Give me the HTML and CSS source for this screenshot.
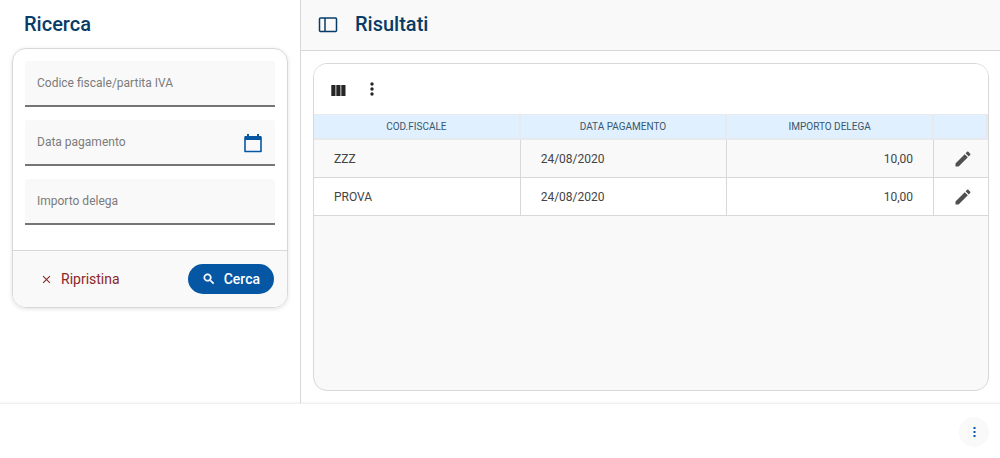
FILE: index.html
```html
<!DOCTYPE html>
<html lang="it">
<head>
<meta charset="utf-8">
<meta name="viewport" content="width=device-width, initial-scale=1">
<title>Ricerca deleghe</title>
<link rel="stylesheet" href="styles.css">
</head>
<body>
<div class="workspace">
  <aside class="sidebar">
    <h2 class="title sidebar-title">Ricerca</h2>
    <form class="search-card">
      <div class="fields">
        <div class="field">
          <input class="field-input" id="codice" type="text">
          <label class="field-label" for="codice">Codice fiscale/partita IVA</label>
        </div>
        <div class="field">
          <input class="field-input" id="data" type="text">
          <label class="field-label" for="data">Data pagamento</label>
          <button class="icon-button date-button" type="button" aria-label="Apri calendario">
            <svg width="18" height="20" viewBox="0 0 18 20"><path d="M1 4h16v14.500H1z" fill="none" stroke="currentColor" stroke-width="1.600" stroke-linejoin="round"/><path d="M1 3h16v4H1zM3 1h2v3H3zM13 1h2v3h-2z" fill="currentColor"/></svg>
          </button>
        </div>
        <div class="field">
          <input class="field-input" id="importo" type="text">
          <label class="field-label" for="importo">Importo delega</label>
        </div>
      </div>
      <div class="actions">
        <button class="button reset-button" type="reset">
          <svg width="13" height="13" viewBox="0 0 24 24" fill="currentColor"><path d="M19 6.410 17.590 5 12 10.590 6.410 5 5 6.410 10.590 12 5 17.590 6.410 19 12 13.410 17.590 19 19 17.590 13.410 12z"/></svg>
          Ripristina
        </button>
        <button class="button search-button" type="button">
          <svg width="14" height="14" viewBox="0 0 24 24" fill="currentColor" stroke="currentColor" stroke-width="1"><path d="M15.500 14h-.79l-.28-.27C15.410 12.590 16 11.110 16 9.500 16 5.910 13.090 3 9.500 3S3 5.910 3 9.500 5.910 16 9.500 16c1.610 0 3.090-.59 4.230-1.570l.27.28v.79l5 4.990L20.490 19l-4.990-5zm-6 0C7.010 14 5 11.990 5 9.500S7.010 5 9.500 5 14 7.010 14 9.500 11.990 14 9.500 14z"/></svg>
          Cerca
        </button>
      </div>
    </form>
  </aside>
  <main class="results">
    <header class="results-header">
      <button class="icon-button panel-button" type="button" aria-label="Mostra o nascondi ricerca">
        <svg width="20" height="18" viewBox="0 0 20 18" fill="none" stroke="currentColor" stroke-width="1.500"><rect x="1.500" y="3" width="17" height="13.500" rx="1"/><path d="M7 3v13.500"/></svg>
      </button>
      <h2 class="title">Risultati</h2>
    </header>
    <section class="results-card">
      <div class="toolbar">
        <button class="icon-button" type="button" aria-label="Colonne">
          <svg width="15" height="14" viewBox="0 0 15 14" fill="currentColor"><path d="M.3 3h4.200v11H.3zM5.300 3h4.200v11H5.300zM10.300 3h4.200v11h-4.200z"/></svg>
        </button>
        <button class="icon-button" type="button" aria-label="Altre opzioni">
          <svg width="4" height="14" viewBox="0 0 4 14" fill="currentColor"><circle cx="2" cy="2" r="1.700"/><circle cx="2" cy="7" r="1.700"/><circle cx="2" cy="12" r="1.700"/></svg>
        </button>
      </div>
      <table class="grid">
        <thead>
          <tr><th>COD.FISCALE</th><th>DATA PAGAMENTO</th><th>IMPORTO DELEGA</th><th class="edit-column"></th></tr>
        </thead>
        <tbody>
          <tr>
            <td>ZZZ</td><td>24/08/2020</td><td class="amount">10,00</td>
            <td class="edit-cell"><button class="icon-button" type="button" aria-label="Modifica ZZZ"><svg width="20" height="20" viewBox="0 0 24 24" fill="currentColor"><path d="M3 17.250V21h3.750L17.810 9.940l-3.750-3.750L3 17.250zM20.710 7.040c.39-.39.39-1.020 0-1.410l-2.340-2.340c-.39-.39-1.020-.39-1.410 0l-1.830 1.830 3.750 3.750 1.830-1.830z"/></svg></button></td>
          </tr>
          <tr>
            <td>PROVA</td><td>24/08/2020</td><td class="amount">10,00</td>
            <td class="edit-cell"><button class="icon-button" type="button" aria-label="Modifica PROVA"><svg width="20" height="20" viewBox="0 0 24 24" fill="currentColor"><path d="M3 17.250V21h3.750L17.810 9.940l-3.750-3.750L3 17.250zM20.710 7.040c.39-.39.39-1.020 0-1.410l-2.340-2.340c-.39-.39-1.020-.39-1.410 0l-1.830 1.830 3.750 3.750 1.830-1.830z"/></svg></button></td>
          </tr>
        </tbody>
      </table>
    </section>
  </main>
</div>
<footer class="bottom-bar">
  <button class="icon-button more-button" type="button" aria-label="Altre azioni">
    <svg width="3" height="10" viewBox="0 0 3 10" fill="currentColor"><path d="M.5 0h2v2h-2zM.5 4h2v2h-2zM.5 8h2v2h-2z"/></svg>
  </button>
</footer>
</body>
</html>
```

FILE: styles.css
```css
* {
  box-sizing: border-box;
}

body {
  margin: 0;
  min-height: 100vh;
  display: flex;
  flex-direction: column;
  background: #fff;
  color: #444;
  font: 12px/16px Roboto, "Liberation Sans", sans-serif;
}

button,
input {
  font: inherit;
}

svg {
  display: block;
}

.workspace {
  flex: 1;
  display: flex;
}

.title {
  margin: 0;
  color: #083b66;
  font-size: 20px;
  font-weight: 500;
  line-height: 24px;
}

.icon-button {
  display: inline-flex;
  align-items: center;
  justify-content: center;
  padding: 0;
  border: 0;
  background: none;
  color: inherit;
  cursor: pointer;
}

/* Search panel */
.sidebar {
  flex: 0 0 301px;
  padding: 12px;
  border-right: 1px solid #d8d8d8;
}

.sidebar-title {
  padding: 0 12px 12px;
}

.search-card {
  overflow: hidden;
  border: 1px solid #d8d8d8;
  border-radius: 14px;
  box-shadow: 0 1px 4px rgba(0, 0, 0, 0.12);
}

.fields {
  display: grid;
  gap: 13px;
  padding: 12px 12px 25px;
}

.field {
  display: grid;
  grid-template-columns: 1fr auto;
  align-items: center;
  overflow: hidden;
  border-bottom: 2px solid #757575;
  border-radius: 3px 3px 0 0;
  background: #f9f9f9;
}

.field-input {
  grid-area: 1 / 1 / 2 / 3;
  width: 100%;
  height: 44px;
  padding: 14px 12px 0;
  border: 0;
  outline: 0;
  background: none;
  color: #444;
}

.field-label {
  grid-area: 1 / 1;
  padding-left: 12px;
  color: #7b7b7b;
  pointer-events: none;
}

.date-button {
  grid-area: 1 / 2;
  padding-top: 2px;
  padding-right: 13px;
  color: #0557a3;
}

.actions {
  display: flex;
  align-items: center;
  justify-content: space-between;
  padding: 13px;
  border-top: 1px solid #d8d8d8;
  background: #f9f9f9;
}

.button {
  display: inline-flex;
  align-items: center;
  gap: 8px;
  height: 30px;
  padding: 0 14px;
  border: 0;
  border-radius: 15px;
  font-size: 14px;
  cursor: pointer;
}

.reset-button {
  background: none;
  color: #8b2626;
}

.search-button {
  background: #0557a3;
  color: #fff;
  font-weight: 500;
}

/* Results panel */
.results {
  flex: 1;
  min-width: 0;
  display: flex;
  flex-direction: column;
}

.results-header {
  display: flex;
  align-items: center;
  gap: 17px;
  padding: 12px 17px 14px;
  border-bottom: 1px solid #d8d8d8;
  background: #f9f9f9;
}

.panel-button {
  color: #083b66;
}

.results-card {
  flex: 1;
  margin: 12px 11px 12px 12px;
  overflow: hidden;
  border: 1px solid #d8d8d8;
  border-radius: 14px;
  background: #f9f9f9;
}

.toolbar {
  display: flex;
  align-items: center;
  gap: 24px;
  height: 50px;
  padding: 0 17px;
  background: #fff;
  color: #262626;
}

.grid {
  width: 100%;
  table-layout: fixed;
  border-collapse: separate;
  border-spacing: 0;
}

.grid th {
  height: 26px;
  padding: 0;
  border: solid #e6eaed;
  border-width: 1px 2px 2px 0;
  background: #e0f0fe;
  color: #38576f;
  font-size: 10px;
  font-weight: 400;
}

.grid .edit-column {
  width: 54px;
}

.grid td {
  height: 38px;
  padding: 0 20px;
  border: solid #d8d8d8;
  border-width: 0 1px 1px 0;
  background: #fff;
}

.grid tbody tr:nth-child(odd) td {
  background: #f9f9f9;
}

.grid .amount {
  text-align: right;
}

.grid .edit-cell {
  padding: 0 15px 0 0;
  border-right: 0;
  text-align: right;
}

.edit-cell .icon-button {
  vertical-align: middle;
  color: #505050;
}

/* Bottom actions */
.bottom-bar {
  display: flex;
  justify-content: flex-end;
  padding: 13px 11px 11px;
  border-top: 1px solid #f0f0f0;
  box-shadow: 0 -1px 2px rgba(0, 0, 0, 0.04);
}

.more-button {
  width: 30px;
  height: 30px;
  border-radius: 50%;
  background: #f9f9f9;
  color: #0557a3;
}
```
